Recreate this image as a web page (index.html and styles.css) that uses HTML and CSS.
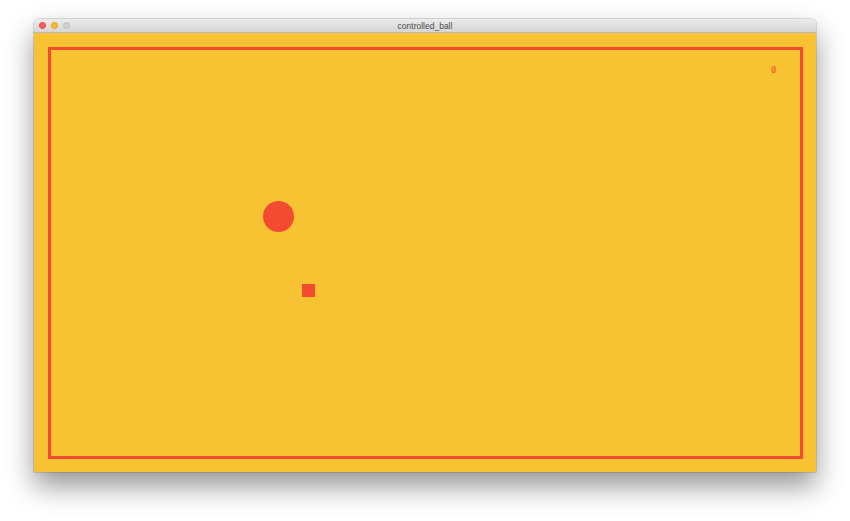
FILE: index.html
```html
<!DOCTYPE html>
<html>
<head>
<meta charset="utf-8">
<link rel="stylesheet" href="styles.css">
<title>controlled_ball</title>
</head>
<body>
<div class="window">
  <div class="titlebar">
    <div class="lights">
      <span class="light close"></span>
      <span class="light min"></span>
      <span class="light max"></span>
    </div>
    <div class="title">controlled_ball</div>
  </div>
  <div class="content">
    <div class="arena">
      <div class="ball"></div>
      <div class="target"></div>
      <div class="score">0</div>
    </div>
  </div>
</div>
</body>
</html>
```
FILE: styles.css
```css
html, body {
  margin: 0;
  padding: 0;
  background: #ffffff;
  width: 850px;
  height: 521px;
  overflow: hidden;
}
.window {
  margin: 19px 0 0 34px;
  width: 782px;
  height: 453px;
  display: flex;
  flex-direction: column;
  border-radius: 4px 4px 0 0;
  box-shadow: 0 14px 28px rgba(0, 0, 0, 0.42), 0 0 0 0.5px rgba(0, 0, 0, 0.25);
}
.titlebar {
  height: 14px;
  flex: none;
  position: relative;
  display: flex;
  align-items: center;
  justify-content: center;
  background: linear-gradient(#ececec, #d6d6d6);
  border-radius: 4px 4px 0 0;
  border-bottom: 1px solid #b9b9b9;
  box-sizing: border-box;
}
.lights {
  position: absolute;
  left: 5px;
  top: 3px;
  display: flex;
  gap: 5px;
}
.light {
  width: 7px;
  height: 7px;
  border-radius: 50%;
  box-sizing: border-box;
}
.close { background: #fc5f57; border: 0.5px solid #e0443e; }
.min { background: #fdbc2e; border: 0.5px solid #dea123; }
.max { background: #cfcfcf; border: 0.5px solid #bdbdbd; }
.title {
  font-family: "Liberation Sans", Arial, sans-serif;
  font-size: 8.5px;
  color: #4a4a4a;
  line-height: 14px;
}
.content {
  flex: 1;
  background: #f8c332;
  padding: 14px 13px 13px 14px;
  display: flex;
}
.arena {
  flex: 1;
  border: 3px solid #f24b32;
  position: relative;
}
.ball {
  position: absolute;
  left: 212px;
  top: 151px;
  width: 31px;
  height: 31px;
  border-radius: 50%;
  background: #f24b32;
}
.target {
  position: absolute;
  left: 251px;
  top: 234px;
  width: 13px;
  height: 13px;
  background: #f24b32;
}
.score {
  position: absolute;
  left: 720px;
  top: 16px;
  font-family: "DejaVu Sans Mono", monospace;
  font-size: 9px;
  font-weight: bold;
  color: #f4662c;
  line-height: 9px;
}
```
